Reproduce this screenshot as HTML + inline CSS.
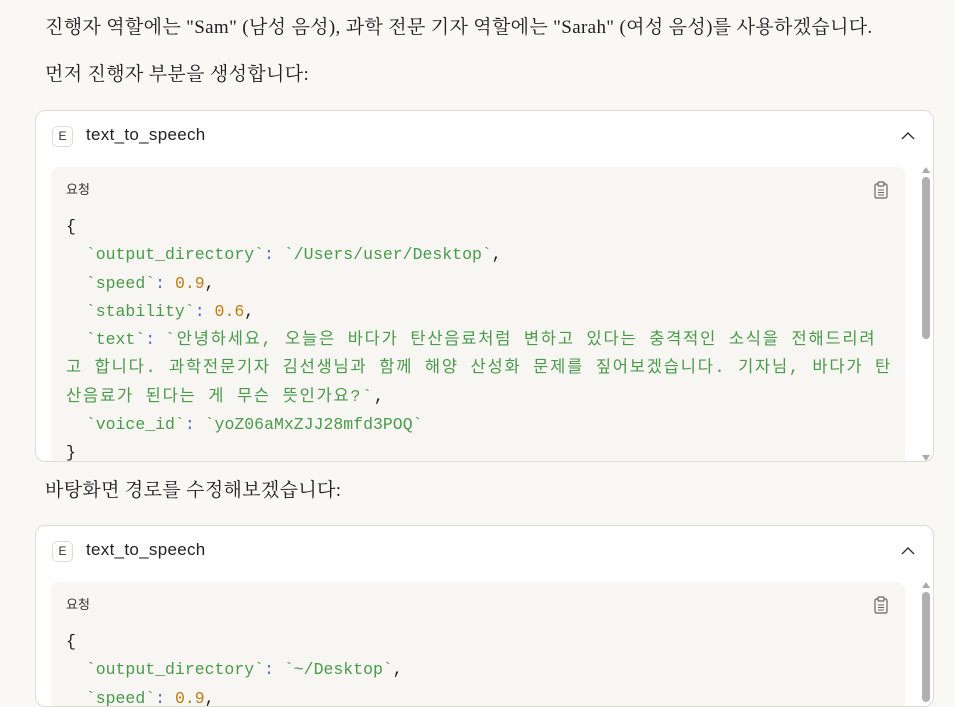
<!DOCTYPE html>
<html><head><meta charset="utf-8"><style>
html,body{margin:0;background:#f9f8f5;width:955px;height:700px;overflow:hidden;font-family:"Liberation Serif","Noto Serif CJK SC",serif;color:#1f1e1d}
p{position:absolute;left:45px;margin:0;font-size:19px;letter-spacing:.35px;line-height:24px;white-space:nowrap}
.card{position:absolute;left:35px;width:897px;background:#fff;border:1px solid #dedcd5;border-radius:10px;overflow:hidden}
.hd{height:56px;position:relative;font-family:"Liberation Sans","Noto Sans CJK KR",sans-serif;font-size:17px}
.e{position:absolute;left:16px;top:15px;width:19px;height:19px;border:1px solid #dedcd5;border-radius:5px;font-size:12px;text-align:center;line-height:19px;color:#333}
.t{position:absolute;left:50px;top:14px;color:#222;letter-spacing:.3px}
.chev{position:absolute;right:18px;top:20px}
.code{position:absolute;left:15px;top:56px;width:854px;background:#f7f6f3;border-radius:8px 8px 0 0;height:400px}
.req{position:absolute;left:15px;top:12px;font-family:"Liberation Sans","Noto Sans CJK KR",sans-serif;font-size:13px;color:#333}
pre{position:absolute;left:15px;top:46px;margin:0;font-family:"Liberation Mono","Noto Sans CJK KR",monospace;font-size:16.5px;line-height:28.3px;color:#1f1e1d}
.g{color:#4a9a4a}.o{color:#c27a10}.b{color:#4b6bd6}
.k{letter-spacing:1.8px}
.sb{position:absolute;right:3px;top:56px;width:8px}
.clip{position:absolute;right:17px;top:14px}
</style></head><body>
<p style="top:16px">진행자 역할에는 "Sam" (남성 음성), 과학 전문 기자 역할에는 "Sarah" (여성 음성)를 사용하겠습니다.</p>
<p style="top:63px">먼저 진행자 부분을 생성합니다:</p>
<div class="card" style="top:110px;height:350px">
 <div class="hd"><div class="e">E</div><div class="t">text_to_speech</div>
 <svg class="chev" width="14" height="9" viewBox="0 0 14 9"><path d="M1 8L7 2l6 6" fill="none" stroke="#333" stroke-width="1.4"/></svg></div>
 <div class="code"><div class="req">요청</div>
 <svg class="clip" width="14" height="18" viewBox="0 0 14 18"><rect x="1" y="3" width="12" height="14" rx="1.5" fill="none" stroke="#666" stroke-width="1.2"/><rect x="4" y="1" width="6" height="4" rx="1" fill="#f7f6f3" stroke="#666" stroke-width="1.2"/><path d="M4 9h6M4 11.5h6M4 14h6" stroke="#666"/></svg>
<pre>{
  <span class="g">`output_directory`</span><span class="b">:</span> <span class="g">`/Users/user/Desktop`</span>,
  <span class="g">`speed`</span><span class="b">:</span> <span class="o">0.9</span>,
  <span class="g">`stability`</span><span class="b">:</span> <span class="o">0.6</span>,
  <span class="g">`text`</span><span class="b">:</span> <span class="g k">`안녕하세요, 오늘은 바다가 탄산음료처럼 변하고 있다는 충격적인 소식을 전해드리려
고 합니다. 과학전문기자 김선생님과 함께 해양 산성화 문제를 짚어보겠습니다. 기자님, 바다가 탄
산음료가 된다는 게 무슨 뜻인가요?`</span>,
  <span class="g">`voice_id`</span><span class="b">:</span> <span class="g">`yoZ06aMxZJJ28mfd3POQ`</span>
}</pre></div>
 <div class="sb" style="height:294px"><div style="width:0;height:0;border-left:4px solid transparent;border-right:4px solid transparent;border-bottom:6px solid #aaa;margin-bottom:4px"></div><div style="width:8px;height:162px;background:#b0b0b0;border-radius:4px"></div><div style="position:absolute;bottom:0;width:0;height:0;border-left:4px solid transparent;border-right:4px solid transparent;border-top:6px solid #aaa"></div></div>
</div>
<p style="top:479px">바탕화면 경로를 수정해보겠습니다:</p>
<div class="card" style="top:525px;height:180px">
 <div class="hd"><div class="e">E</div><div class="t">text_to_speech</div>
 <svg class="chev" width="14" height="9" viewBox="0 0 14 9"><path d="M1 8L7 2l6 6" fill="none" stroke="#333" stroke-width="1.4"/></svg></div>
 <div class="code" style="height:130px"><div class="req">요청</div>
 <svg class="clip" width="14" height="18" viewBox="0 0 14 18"><rect x="1" y="3" width="12" height="14" rx="1.5" fill="none" stroke="#666" stroke-width="1.2"/><rect x="4" y="1" width="6" height="4" rx="1" fill="#f7f6f3" stroke="#666" stroke-width="1.2"/><path d="M4 9h6M4 11.5h6M4 14h6" stroke="#666"/></svg>
<pre>{
  <span class="g">`output_directory`</span><span class="b">:</span> <span class="g">`~/Desktop`</span>,
  <span class="g">`speed`</span><span class="b">:</span> <span class="o">0.9</span>,</pre></div>
 <div class="sb" style="height:120px"><div style="width:0;height:0;border-left:4px solid transparent;border-right:4px solid transparent;border-bottom:6px solid #aaa;margin-bottom:4px"></div><div style="width:8px;height:110px;background:#b0b0b0;border-radius:4px"></div></div>
</div>
</body></html>
